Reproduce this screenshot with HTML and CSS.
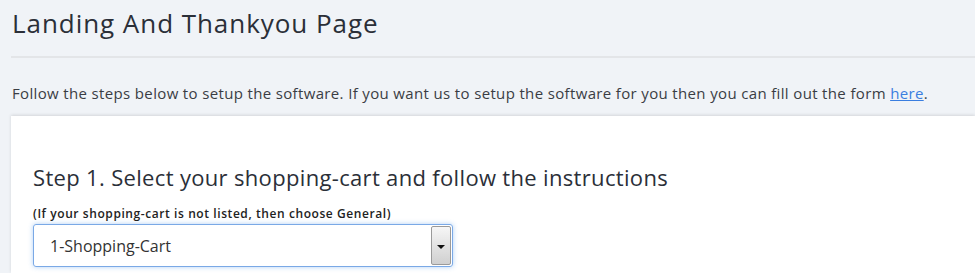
FILE: index.html
```html
<!DOCTYPE html>
<html lang="en">
<head>
    <meta charset="UTF-8">
    <meta name="viewport" content="width=device-width, initial-scale=1.0">
    <title>Landing And Thankyou Page</title>
    <link rel="stylesheet" href="styles.css">
</head>
<body>

    <div class="page">
        <div class="page-header">
            <h1>Landing And Thankyou Page</h1>
        </div>

        <p class="intro">Follow the steps below to setup the software. If you want us to setup the software for you then you can fill out the form <a href="#">here</a>.</p>

        <div class="card">
            <h2>Step 1. Select your shopping-cart and follow the instructions</h2>
            <p class="hint">(If your shopping-cart is not listed, then choose General)</p>
            <div class="select-box">
                <span class="select-value">1-Shopping-Cart</span>
                <span class="select-arrow"></span>
            </div>
        </div>
    </div>

</body>
</html>
```

FILE: styles.css
```css
body {
    margin: 0;
    font-family: 'Open Sans', sans-serif;
    background: #f0f3f7;
    color: #333;
    overflow: hidden;
}
.page {
    padding-left: 11px;
}
.page-header {
    border-bottom: 2px solid #e3e5e8;
    padding: 6px 0 16px 1px;
}
h1 {
    margin: 0;
    font-size: 26px;
    font-weight: 400;
    letter-spacing: 0.95px;
    color: #2b2f38;
    line-height: 34px;
}
.intro {
    margin: 0;
    padding: 25px 0 0 1px;
    height: 33px;
    font-size: 15px;
    line-height: 20px;
    letter-spacing: 0.35px;
    color: #3a3d44;
}
.intro a {
    color: #3a7ee0;
    text-decoration: underline;
}
.card {
    background: white;
    box-shadow: 0 -1px 3px rgba(0, 0, 0, 0.12);
    padding: 46px 0 0 22px;
    height: 157px;
    box-sizing: border-box;
}
h2 {
    margin: 0;
    font-size: 22px;
    font-weight: 400;
    letter-spacing: 0.33px;
    color: #2b2f38;
    line-height: 30px;
}
.hint {
    margin: 14px 0 2px;
    font-size: 12px;
    line-height: 16px;
    font-weight: 600;
    letter-spacing: 0.58px;
    color: #222;
}
.select-box {
    width: 420px;
    height: 43px;
    box-sizing: border-box;
    border: 1px solid #7aa9e6;
    border-radius: 3px;
    box-shadow: 0 0 5px rgba(80, 150, 230, 0.45);
    display: flex;
    align-items: stretch;
}
.select-value {
    flex: 1;
    display: flex;
    align-items: center;
    padding-left: 16px;
    font-size: 16px;
    color: #333;
}
.select-arrow {
    width: 18px;
    border: 1px solid #9a9a9a;
    border-radius: 2px;
    background: linear-gradient(#f6f6f6, #d0d0d0);
    position: relative;
    margin: 1px 1px 1px 0;
}
.select-arrow::after {
    content: "";
    position: absolute;
    left: 5px;
    top: 18px;
    border-left: 4px solid transparent;
    border-right: 4px solid transparent;
    border-top: 4px solid #111;
}
```
